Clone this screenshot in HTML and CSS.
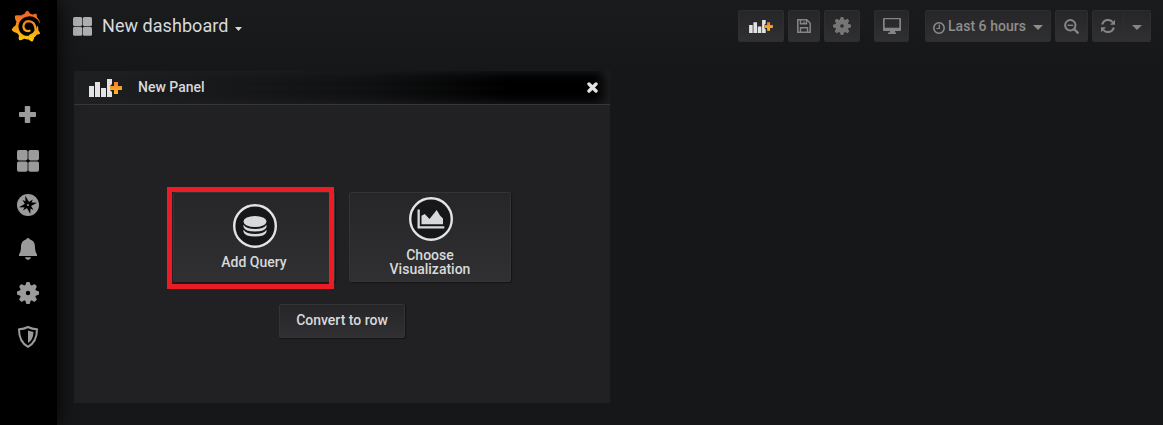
FILE: index.html
```html
<!DOCTYPE html>
<html lang="en">
<head>
<meta charset="utf-8">
<title>New dashboard</title>
<link rel="stylesheet" href="styles.css">
</head>
<body>
<svg class="defs" width="0" height="0" aria-hidden="true">
  <defs>
    <linearGradient id="flame" gradientUnits="userSpaceOnUse" x1="0" y1="0" x2="0" y2="350"><stop offset="0" stop-color="#f05a28"/><stop offset="1" stop-color="#fbca0a"/></linearGradient>
    <linearGradient id="amber" x1="0" y1="0" x2="0" y2="1"><stop offset="0" stop-color="#f2793a"/><stop offset="1" stop-color="#fcc10f"/></linearGradient>
    <symbol id="grid" viewBox="0 0 22 22"><rect width="10.6" height="10.4" rx="1.8"/><rect x="11.4" width="10.6" height="10.4" rx="1.8"/><rect y="11.4" width="10.6" height="10.4" rx="1.8"/><rect x="11.4" y="11.4" width="10.6" height="10.4" rx="1.8"/></symbol>
    <symbol id="gear" viewBox="-11 -11 22 22">
      <circle r="5.2" fill="none" stroke="currentColor" stroke-width="6"/>
      <g id="teeth"><path id="tooth" d="M-2.9-7-1.8-10.4Q-1.7-11-1-11H1Q1.7-11 1.8-10.4L2.9-7z"/><use href="#tooth" transform="rotate(90)"/><use href="#tooth" transform="rotate(180)"/><use href="#tooth" transform="rotate(270)"/></g>
      <use href="#teeth" transform="rotate(45)"/>
    </symbol>
    <symbol id="addpanel" viewBox="0 0 33 18"><path d="M0 7h5v11H0zM6 3h5v15H6zM12 9h5v9h-5zM18 0h5v5l-2 2v4l2 2v5h-5z"/><path fill="url(#amber)" d="M25 3h4v4h4v4h-4v4h-4v-4h-4V7h4z"/></symbol>
  </defs>
</svg>
<div class="app">
  <nav class="sidebar">
    <svg class="logo" viewBox="0 0 351 365"><path fill="url(#flame)" d="M342 161.200c-.6-6.100-1.600-13.100-3.600-20.900-2-7.700-5-16.200-9.400-25-4.400-8.800-10.100-17.900-17.500-26.800-2.900-3.500-6.100-6.900-9.500-10.200 5.100-20.300-6.200-37.900-6.200-37.900-19.500-1.200-31.900 6.100-36.500 9.400q-23-9-36.600-10.200c-8.500-27.200-32.900-38.600-32.900-38.600-27.300 17.300-32.400 41.500-32.400 41.500q-22 5-41 18.500c-37.800-14.400-71.300 2.900-71.300 2.900-3.100 40.200 15.100 65.500 18.700 70.100q-7 19-9.200 39.800C18.800 192.700 8.500 228 8.500 228c29.100 33.500 63.100 35.600 63.100 35.600q9 17 22.400 30.100c-10.600 30.400 1.500 55.600 1.500 55.600 32.400 1.200 53.700-14.200 58.200-17.700q28 9 54.200 7.500c15.300 21.800 42.100 24.900 42.100 24.900 19.100-20.100 20.200-40.100 20.200-46.200q19-13 32.800-34.800c21.600 1.200 36.900-13.400 36.900-13.400-3.600-22.500-16.400-33.500-19.400-35.800q3-24-6-48l24-24z"/><path d="M342 162C326 105 268 66 206 70C136 74 86 126 88 190C90 251 135 296 190 296C239 296 284 263 296 214L310 181L346 210z"/><path fill="none" stroke="url(#flame)" stroke-width="27" stroke-linecap="round" d="M290 236C284 140 240 126 206 126C166 127 142 158 145 192C149 232 188 250 217 238"/><path fill="none" stroke="url(#flame)" stroke-width="22" stroke-linecap="round" d="M292 232C278 262 250 284 222 292"/></svg>
    <div class="nav">
      <span class="nav-item nav-add"><svg width="17" height="17" viewBox="0 0 17 17"><path d="M6.500 0h4q.7 0 .7.700V6h5.100q.7 0 .7.700v3.600q0 .7-.7.700h-5.100v5.300q0 .7-.7.700h-4q-.7 0-.7-.7V11H.7q-.7 0-.7-.7V6.700Q0 6 .7 6h5.100V.7q0-.7.7-.7z"/></svg></span>
      <span class="nav-item"><svg width="22" height="22"><use href="#grid"/></svg></span>
      <span class="nav-item"><svg width="22" height="22" viewBox="0 0 22 22"><circle cx="11" cy="11" r="11"/><path fill="#000" d="M8.300 1.800 12.200 8.200 20 8.800 13.600 12.200 13.300 20 9.600 13.600 2 13.200 8.400 9.600z"/><path fill="#000" d="M5.500 6 11 8.500 15.800 5.500 13.500 11 16.500 16 11 13.500 6 16.500 8.500 11z"/><circle cx="11" cy="11" r="1"/></svg></span>
      <span class="nav-item"><svg width="18" height="22" viewBox="0 0 18 22"><path d="M9 0q1.700 0 1.900 1.600C15 2.700 16 6 16 9q0 5 2 7.200V18H0v-1.800Q2 14 2 9c0-3 1-6.300 5.100-7.400Q7.300 0 9 0zM6 19.300h6Q11.500 22 9 22t-3-2.700z"/></svg></span>
      <span class="nav-item"><svg width="22" height="22"><use href="#gear"/></svg></span>
      <span class="nav-item"><svg width="20" height="22" viewBox="0 0 20 22"><path fill="none" stroke="currentColor" stroke-width="2" stroke-linejoin="round" d="M10 1Q14 3 19 3.200C19 11 17 17 10 20.800 3 17 1 11 1 3.200Q6 3 10 1z"/><path d="M10 4.500q2 1 5.500 1.400-.3 8-5.500 11z"/></svg></span>
    </div>
  </nav>
  <main class="main">
    <header class="toolbar">
      <svg class="title-icon" width="19" height="19"><use href="#grid"/></svg>
      <h1 class="title">New dashboard</h1>
      <svg class="title-caret" width="7" height="4" viewBox="0 0 7 4"><path d="M0 0h7L3.500 4z"/></svg>
      <div class="actions">
        <button class="btn add"><svg width="24" height="13"><use href="#addpanel"/></svg></button>
        <button class="btn save"><svg width="14" height="14" viewBox="0 0 14 14"><path fill="none" stroke="currentColor" stroke-width="1.500" d="M.8.8h9l3.400 3.400v9H.8zM3.500.8v4h6v-4M3.500 13V8.700h7V13M7 2.500V4"/></svg></button>
        <button class="btn settings"><svg width="18" height="18"><use href="#gear"/></svg></button>
        <button class="btn tv"><svg width="18" height="16" viewBox="0 0 18 16"><path fill-rule="evenodd" d="M1 0h16q1 0 1 1v11q0 1-1 1h-5v1.500h1V16H5v-1.500h2V13H1q-1 0-1-1V1q0-1 1-1zm.7 1.300v8.500h14.600V1.300z"/></svg></button>
        <button class="btn time"><svg width="12" height="12" viewBox="0 0 12 12"><circle cx="6" cy="6" r="5.200" fill="none" stroke="currentColor" stroke-width="1.500"/><path fill="none" stroke="currentColor" stroke-width="1.200" d="M6.300 2.500v4H3.500"/></svg><span>Last 6 hours</span><i class="caret"></i></button>
        <button class="btn zoom"><svg width="15" height="15" viewBox="0 0 15 15"><circle cx="6.300" cy="6.300" r="5.200" fill="none" stroke="currentColor" stroke-width="2"/><path stroke="currentColor" stroke-width="2.400" stroke-linecap="round" d="m10.500 10.500 3.200 3.200"/><path d="M3.500 5.600h5.600v1.400H3.500z"/></svg></button>
        <div class="group">
          <button class="btn refresh"><svg width="14" height="14" viewBox="0 0 14 14"><path fill="none" stroke="currentColor" stroke-width="2" d="M1.200 5.500C2.500.5 8.500-.5 11.700 3.200M12.800 8.500C11.500 13.500 5.500 14.500 2.300 10.800"/><path d="M14 .8v5H9zM0 13.200v-5h5z"/></svg></button>
          <button class="btn interval"><i class="caret"></i></button>
        </div>
      </div>
    </header>
    <section class="panel">
      <div class="panel-head">
        <svg width="33" height="18"><use href="#addpanel"/></svg>
        <span class="panel-title">New Panel</span>
        <svg class="close" width="11" height="11" viewBox="0 0 11 11"><path stroke="currentColor" stroke-width="3.400" stroke-linecap="round" d="m2 2 7 7M9 2 2 9"/></svg>
      </div>
      <div class="panel-body">
        <div class="choices">
          <button class="choice query"><svg width="44" height="44" viewBox="0 0 44 44"><circle class="disc" cx="22" cy="22" r="20.800"/><ellipse cx="22" cy="17.500" rx="11.500" ry="5.500"/><path d="M10.500 20.700q3 4.300 11.500 4.300t11.500-4.300v2.200q-1.500 4.600-11.500 4.600t-11.500-4.600zM10.500 25.700Q13.500 30 22 30t11.500-4.300v2.200Q32 32.500 22 32.500t-11.500-4.600z"/></svg><span>Add Query</span></button>
          <button class="choice"><svg width="44" height="44" viewBox="0 0 44 44"><circle class="disc" cx="22" cy="22" r="20.800"/><path d="M8.500 12.500h2.300v16.700h24.500v2.300H8.500zM12.500 27.300v-8.500l3.300-1.800 4.700 5 7.200-9 3.300 5.500 3 3v5.800z"/></svg><span>Choose<br>Visualization</span></button>
          <div class="highlight"></div>
        </div>
        <button class="convert">Convert to row</button>
      </div>
    </section>
  </main>
</div>
</body>
</html>
```
FILE: styles.css
```css
* { box-sizing: border-box; }
body { margin: 0; background: #161719; color: #d8d9da; font-family: Roboto, sans-serif; }
svg { display: block; fill: currentColor; flex: none; }
.defs { position: absolute; }
button { margin: 0; padding: 0; font: inherit; color: inherit; border: 0; }
.app { display: flex; width: 1163px; height: 425px; overflow: hidden; }
.sidebar { position: relative; width: 57px; flex: none; background: #000; box-shadow: 0 0 20px #000; color: #9b9b9b; }
.logo { width: 30px; height: 32px; margin: 10px 0 0 11px; fill: #000; }
.nav { display: flex; flex-direction: column; padding-top: 53px; }
.nav-item { display: flex; align-items: center; justify-content: center; height: 44px; padding-right: 1px; }
.nav-add { padding: 0 2px 5px 0; }
.main { flex: 1; padding-left: 17px; background: linear-gradient(#1a1b1d, #161719 70px); }
.toolbar { display: flex; align-items: center; height: 52px; padding-right: 12px; }
.title-icon { color: #adafae; margin-left: -1px; }
.title { margin: 0 0 0 10px; font-size: 18px; font-weight: 400; line-height: 24px; letter-spacing: .05px; }
.caret { display: block; border: 5px solid transparent; border-top-color: currentColor; border-bottom: 0; }
.title-caret { margin: 5px 0 0 7px; }
.actions { display: flex; margin-left: auto; color: #858585; }
.btn { display: flex; align-items: center; justify-content: center; height: 32px; border: 1px solid #2e2e30; border-radius: 2px; background: linear-gradient(#262628, #303032); }
.add { width: 46px; color: #e3e3e3; }
.save { width: 32px; margin-left: 4px; }
.settings { width: 36px; margin-left: 4px; color: #757575; }
.tv { width: 35px; margin-left: 14px; }
.time { width: 126px; margin-left: 16px; font-size: 14px; font-weight: 500; color: #8e8e8e; }
.time svg { margin-top: 3px; }
.time span { margin: 0 7px 0 3px; letter-spacing: .04px; }
.time .caret { margin-top: 2px; }
.interval .caret { margin-top: 2px; }
.zoom { width: 33px; margin-left: 4px; }
.group { display: flex; margin-left: 4px; }
.refresh { width: 32px; border-radius: 2px 0 0 2px; }
.interval { width: 27px; border-left: 0; border-radius: 0 2px 2px 0; }
.panel { width: 536px; height: 332px; margin-top: 19px; background: #212124; }
.panel-head { display: flex; align-items: center; height: 34px; padding: 0 12px 0 15px; border-bottom: 1px solid #37373a; background: linear-gradient(90deg, #1f2022, #101112 55%, #000 82%, #000 97%, #151617); box-shadow: inset 0 0 12px #202124; color: #e3e3e3; }
.panel-title { margin: 0 0 2px 16px; font-size: 14px; font-weight: 500; color: #d8d9da; }
.close { margin-left: auto; }
.panel-body { display: flex; flex-direction: column; align-items: flex-start; padding: 87px 0 0 99px; }
.choices { position: relative; display: flex; gap: 14px; margin-bottom: 22px; }
.choice { display: flex; flex-direction: column; align-items: center; justify-content: center; gap: 7px; width: 162px; height: 90px; padding-bottom: 2px; border: 1px solid #343436; border-radius: 2px; background: linear-gradient(#262628, #303032); box-shadow: 1px 1px 1px #151517; font-size: 14px; font-weight: 500; line-height: 14px; }
.choice svg { margin-left: 2px; }
.disc { fill: #161719; stroke: #e3e3e3; stroke-width: 2.400px; }
.highlight { position: absolute; left: -6px; top: -5px; width: 167px; height: 102px; border: 5px solid #ed1c24; }
.convert { width: 126px; height: 34px; margin-left: 106px; padding-bottom: 2px; border: 1px solid #343436; border-radius: 2px; background: linear-gradient(#262628, #303032); box-shadow: 1px 1px 1px #151517; font-size: 14px; font-weight: 500; }
```
